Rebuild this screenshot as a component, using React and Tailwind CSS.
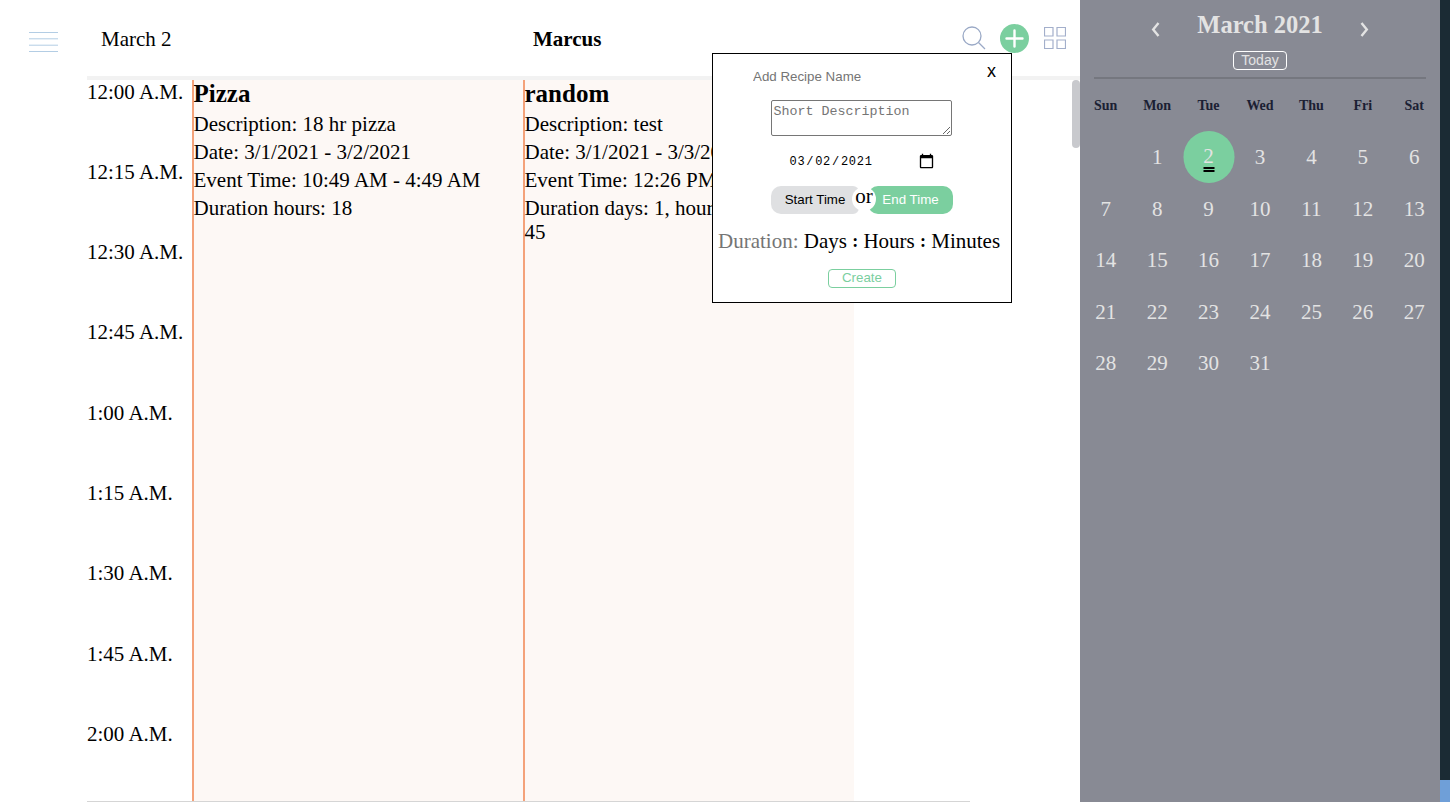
import { useState } from 'react';

const times = ['12:00 A.M.', '12:15 A.M.', '12:30 A.M.', '12:45 A.M.', '1:00 A.M.', '1:15 A.M.', '1:30 A.M.', '1:45 A.M.', '2:00 A.M.'];
const weekdays = ['Sun', 'Mon', 'Tue', 'Wed', 'Thu', 'Fri', 'Sat'];
const days = [null, ...Array.from({ length: 31 }, (_, i) => i + 1)];

const events = [
  {
    title: 'Pizza',
    lines: ['Description: 18 hr pizza', 'Date: 3/1/2021 - 3/2/2021', 'Event Time: 10:49 AM - 4:49 AM', 'Duration hours: 18'],
  },
  {
    title: 'random',
    lines: ['Description: test', 'Date: 3/1/2021 - 3/3/2021', 'Event Time: 12:26 PM - 12:11 PM', 'Duration days: 1, hours: 23, minutes: 45'],
  },
];

function MenuIcon() {
  return (
    <svg width="30" height="20" viewBox="0 0 30 20" className="block">
      <path d="M0 .5h29M0 6.8h29M0 13.2h29M0 19.5h29" stroke="#b3cde4" strokeWidth="1" fill="none" />
    </svg>
  );
}

function Chevron({ flip }) {
  return (
    <svg width="9" height="15" viewBox="0 0 9 15" className={flip ? 'rotate-180' : ''}>
      <path d="M7.5 1L2.2 7.5l5.3 6.5" fill="none" stroke="#e3e3e3" strokeWidth="2.4" />
    </svg>
  );
}

function Header() {
  return (
    <div className="flex h-[76px] items-center pl-[14px] text-[21px] text-black">
      <span className="w-[432px] pt-[4px]">March 2</span>
      <span className="pt-[4px] font-bold">Marcus</span>
      <div className="ml-auto mr-[14px] flex items-center">
        <svg width="24" height="24" viewBox="0 0 24 24" className="mr-[14px]">
          <circle cx="10" cy="10" r="9" fill="none" stroke="#9aa9c6" strokeWidth="1.3" />
          <path d="M16.5 16.5l6.5 6.5" stroke="#9aa9c6" strokeWidth="1.3" />
        </svg>
        <div className="mr-[15px] flex h-[29px] w-[29px] items-center justify-center rounded-full bg-[#7bcf9f]">
          <svg width="19" height="19" viewBox="0 0 19 19">
            <path d="M9.5 1.5v16M1.5 9.5h16" stroke="#fff" strokeWidth="2.4" strokeLinecap="round" />
          </svg>
        </div>
        <svg width="22" height="22" viewBox="0 0 22 22">
          <path d="M.5.5h8.5v8.5h-8.5zM13 .5h8.5v8.5h-8.5zM.5 13h8.5v8.5h-8.5zM13 13h8.5v8.5h-8.5z" fill="none" stroke="#a3afcb" strokeWidth="1.2" />
        </svg>
      </div>
    </div>
  );
}

function RecipePopup() {
  const [mode] = useState('end');
  return (
    <div className="absolute left-[712px] top-[53px] z-10 h-[250px] w-[300px] border border-black bg-white font-['Liberation_Sans',sans-serif]">
      <div className="relative">
        <input
          placeholder="Add Recipe Name"
          className="mt-[14px] ml-[40px] h-[17px] w-[220px] text-[13.33px] outline-none placeholder:text-[#757575]"
        />
        <span className="absolute right-[15px] top-[7px] text-[18px] leading-[20px] text-black">x</span>
      </div>
      <div className="mt-[12px] flex justify-center">
        <textarea
          placeholder="Short Description"
          className="-ml-[2px] h-[36px] w-[181px] rounded-[2px] border border-[#767676] px-[2px] py-[3px] font-['Liberation_Mono',monospace] text-[13.33px] leading-[15px] outline-none placeholder:text-[#757575]"
        />
      </div>
      <div className="mt-[15px] flex justify-center">
        <input
          type="date"
          defaultValue="2021-03-02"
          className="-ml-[1px] h-[22px] w-[146px] font-['Liberation_Mono',monospace] text-[12px] tracking-[0.7px] text-black outline-none [&::-webkit-calendar-picker-indicator]:m-0 [&::-webkit-calendar-picker-indicator]:h-[17px] [&::-webkit-calendar-picker-indicator]:w-[17px] [&::-webkit-calendar-picker-indicator]:p-0"
        />
      </div>
      <div className="relative mx-auto mt-[13px] flex h-[28px] w-[182px] justify-between text-[13.33px]">
        <div className={`flex w-[88px] items-center justify-center rounded-l-[10px] rounded-r-[6px] ${mode === 'start' ? 'bg-[#7bcf9f] text-white' : 'bg-[#dfe0e2] text-black'}`}>
          Start Time
        </div>
        <div className={`flex w-[85px] items-center justify-center rounded-[10px] ${mode === 'end' ? 'bg-[#7bcf9f] text-white' : 'bg-[#dfe0e2] text-black'}`}>
          End Time
        </div>
        <div className="absolute left-[81px] top-[1px] flex h-[24px] w-[24px] items-center justify-center rounded-full bg-white pb-[3px] font-['Liberation_Serif',serif] text-[21px] text-black">
          or
        </div>
      </div>
      <div className="mt-[13px] pl-[5px] font-['Liberation_Serif',serif] text-[21px] leading-[28px] whitespace-nowrap text-black">
        <span className="text-[#757575]">Duration: </span>
        Days <b className="inline-block -translate-y-[1px] text-[18px]">:</b> Hours <b className="inline-block -translate-y-[1px] text-[18px]">:</b> Minutes
      </div>
      <div className="mt-[13px] flex justify-center">
        <button className="h-[19px] w-[68px] rounded-[4px] border border-[#7bcf9f] text-[13.33px] leading-[16px] text-[#7bcf9f]">
          Create
        </button>
      </div>
    </div>
  );
}

function Calendar() {
  return (
    <aside className="h-full w-[360px] shrink-0 bg-[#888a94] font-['Liberation_Serif',serif]">
      <div className="flex h-[50px] items-center justify-center text-[#e3e3e3]">
        <span className="mr-[37px] mt-[8px] flex"><Chevron /></span>
        <span className="text-[24.5px] font-bold">March 2021</span>
        <span className="ml-[37px] mt-[8px] flex"><Chevron flip /></span>
      </div>
      <div className="flex justify-center pt-[1px]">
        <button className="h-[19px] w-[54px] rounded-[4px] border border-white pb-[1px] font-['Liberation_Sans',sans-serif] text-[14px] leading-[15px] text-[#e3e3e3]">
          Today
        </button>
      </div>
      <div className="mx-[14px] mt-[7px] h-[2px] bg-[#75777f]" />
      <div className="mt-[17px] grid grid-cols-7 text-center text-[14px] font-bold leading-[20px] text-[#1b2033]">
        {weekdays.map((d) => (
          <span key={d}>{d}</span>
        ))}
      </div>
      <div className="mt-[15px] grid grid-cols-7 text-center text-[21px] text-[#e3e3e3]">
        {days.map((d, i) => (
          <div key={i} className="relative flex h-[51.5px] items-center justify-center pt-[2px]">
            {d === 2 && (
              <div className="absolute left-1/2 top-0 flex h-[52px] w-[51px] -translate-x-1/2 justify-center rounded-full bg-[#7bcf9f]">
                <div className="absolute top-[36px] h-[5px] w-[11px] border-y-2 border-black" />
              </div>
            )}
            {d && <span className={`relative ${d === 2 ? '-mt-[3px]' : ''}`}>{d}</span>}
          </div>
        ))}
      </div>
    </aside>
  );
}

export default function App() {
  return (
    <div className="relative flex h-[802px] w-[1450px] overflow-hidden bg-white font-['Liberation_Serif',serif] text-black">
      <div className="w-[87px] shrink-0 pl-[29px] pt-[32px]">
        <MenuIcon />
      </div>
      <main className="flex h-full w-[993px] shrink-0 flex-col">
        <Header />
        <div className="h-[4px] bg-[#f2f2f2]" />
        <div className="relative flex min-h-0 flex-1 overflow-hidden">
          <div className="w-[105px] shrink-0 pt-[0.5px] text-[21px] leading-[23px] whitespace-nowrap">
            {times.map((t) => (
              <div key={t} className="h-[80.33px]">{t}</div>
            ))}
          </div>
          {events.map((ev) => (
            <div key={ev.title} className="h-full w-[331px] shrink-0 border-l-2 border-[#f4a27a] bg-[#fdf8f5] text-[21px]">
              <h3 className="-ml-[0.5px] text-[25px] font-bold leading-[28px]">{ev.title}</h3>
              <div className="-ml-[0.5px] mt-[4px]">
                {ev.lines.map((l) => (
                  <p key={l} className="mb-[4px] leading-[24px]">{l}</p>
                ))}
              </div>
            </div>
          ))}
          <div className="absolute right-0 top-0 h-[68px] w-[8px] rounded-[4px] bg-[#c8c9cd]" />
          <div className="absolute bottom-0 left-0 h-[1px] w-[883px] bg-[#d5d5d5]" />
        </div>
      </main>
      <Calendar />
      <div className="flex h-full w-[10px] flex-col justify-end bg-[#1b2b34]">
        <div className="h-[22px] bg-[#6f9fd8]" />
      </div>
      <RecipePopup />
    </div>
  );
}
